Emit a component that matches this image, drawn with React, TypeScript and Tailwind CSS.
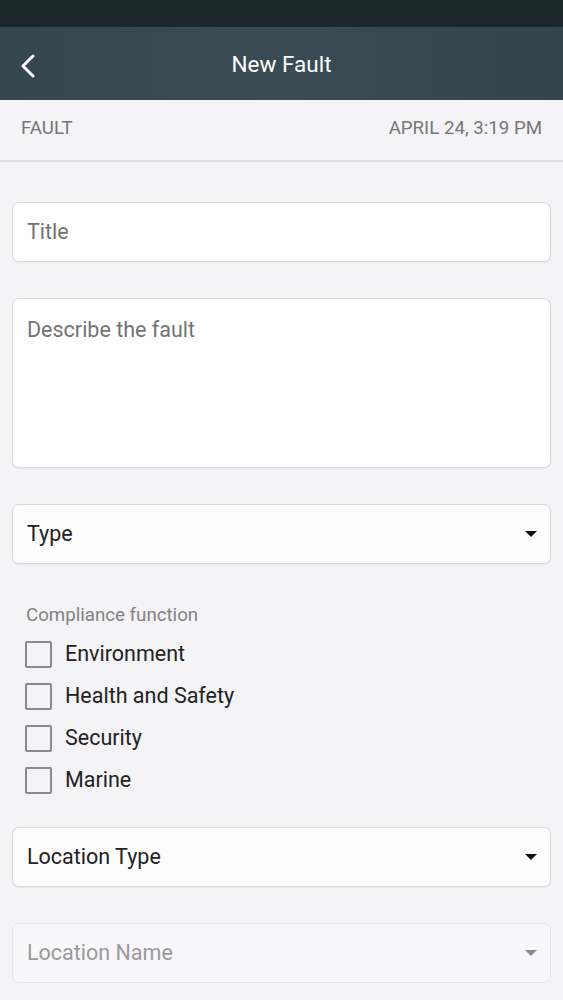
import React from 'react';

const OPTIONS = ['Environment', 'Health and Safety', 'Security', 'Marine'];

const Caret = ({ color }: { color: string }) => (
  <svg width="14" height="8" viewBox="0 0 14 8" className="shrink-0">
    <path d="M1 1 L7 7 L13 1 Z" fill={color} />
  </svg>
);

export default function App() {
  return (
    <div className="w-[563px] h-[1000px] overflow-hidden bg-[#f4f3f5] font-['Roboto','Liberation_Sans',sans-serif]">
      <div className="h-[27px] bg-[#1c272c]" />
      <div className="h-[73px] bg-gradient-to-r from-[#35464e] via-[#3b4b53] to-[#34444c] flex items-center relative">
        <svg width="20" height="24" viewBox="0 0 20 24" className="absolute left-[18px] top-[27px]">
          <path d="M15 2 L5 12 L15 22" fill="none" stroke="#fff" strokeWidth="3" strokeLinecap="round" strokeLinejoin="round" />
        </svg>
        <div className="flex-1 text-center text-white text-[22.5px] pt-[2px]">New Fault</div>
      </div>
      <div className="h-[62px] flex items-center justify-between px-[21px] pb-[4px] border-b-2 border-[#dedde0] text-[#767676] text-[18.7px]">
        <span>FAULT</span>
        <span>APRIL 24, 3:19 PM</span>
      </div>

      <div className="px-[12px] pt-[40px] flex flex-col">
        <div className="h-[60px] bg-white border border-[#dad9dc] rounded-[7px] shadow-[0_1px_2px_rgba(0,0,0,0.06)] flex items-center px-[14px] text-[21.5px] text-[#737373]">
          Title
        </div>

        <div className="mt-[36px] h-[170px] bg-white border border-[#dad9dc] rounded-[7px] shadow-[0_1px_2px_rgba(0,0,0,0.06)] px-[14px] pt-[15px] text-[21.5px] text-[#737373]">
          Describe the fault
        </div>

        <div className="mt-[36px] h-[60px] bg-[#fdfcfd] border border-[#dad9dc] rounded-[7px] shadow-[0_1px_2px_rgba(0,0,0,0.06)] flex items-center justify-between pl-[14px] pr-[12px] text-[21.5px] text-[#222]">
          <span>Type</span>
          <Caret color="#111" />
        </div>

        <div className="mt-[37px] px-[14px] text-[18.7px] text-[#838383]">Compliance function</div>
        <div className="mt-[12px] flex flex-col gap-[15px] px-[13px]">
          {OPTIONS.map(o => (
            <div key={o} className="flex items-center gap-[13px] h-[27px]">
              <div className="w-[27px] h-[27px] border-2 border-[#8a8a8a] rounded-[2px]" />
              <span className="text-[21.5px] text-[#222]">{o}</span>
            </div>
          ))}
        </div>

        <div className="mt-[33px] h-[60px] bg-[#fdfcfd] border border-[#dad9dc] rounded-[7px] shadow-[0_1px_2px_rgba(0,0,0,0.06)] flex items-center justify-between pl-[14px] pr-[12px] text-[21.5px] text-[#222]">
          <span>Location Type</span>
          <Caret color="#111" />
        </div>

        <div className="mt-[36px] h-[60px] bg-[#f8f7f9] border border-[#e6e5e8] rounded-[7px] flex items-center justify-between pl-[14px] pr-[12px] text-[21.5px] text-[#9a9a9a]">
          <span>Location Name</span>
          <Caret color="#8c8c8c" />
        </div>
      </div>
    </div>
  );
}
